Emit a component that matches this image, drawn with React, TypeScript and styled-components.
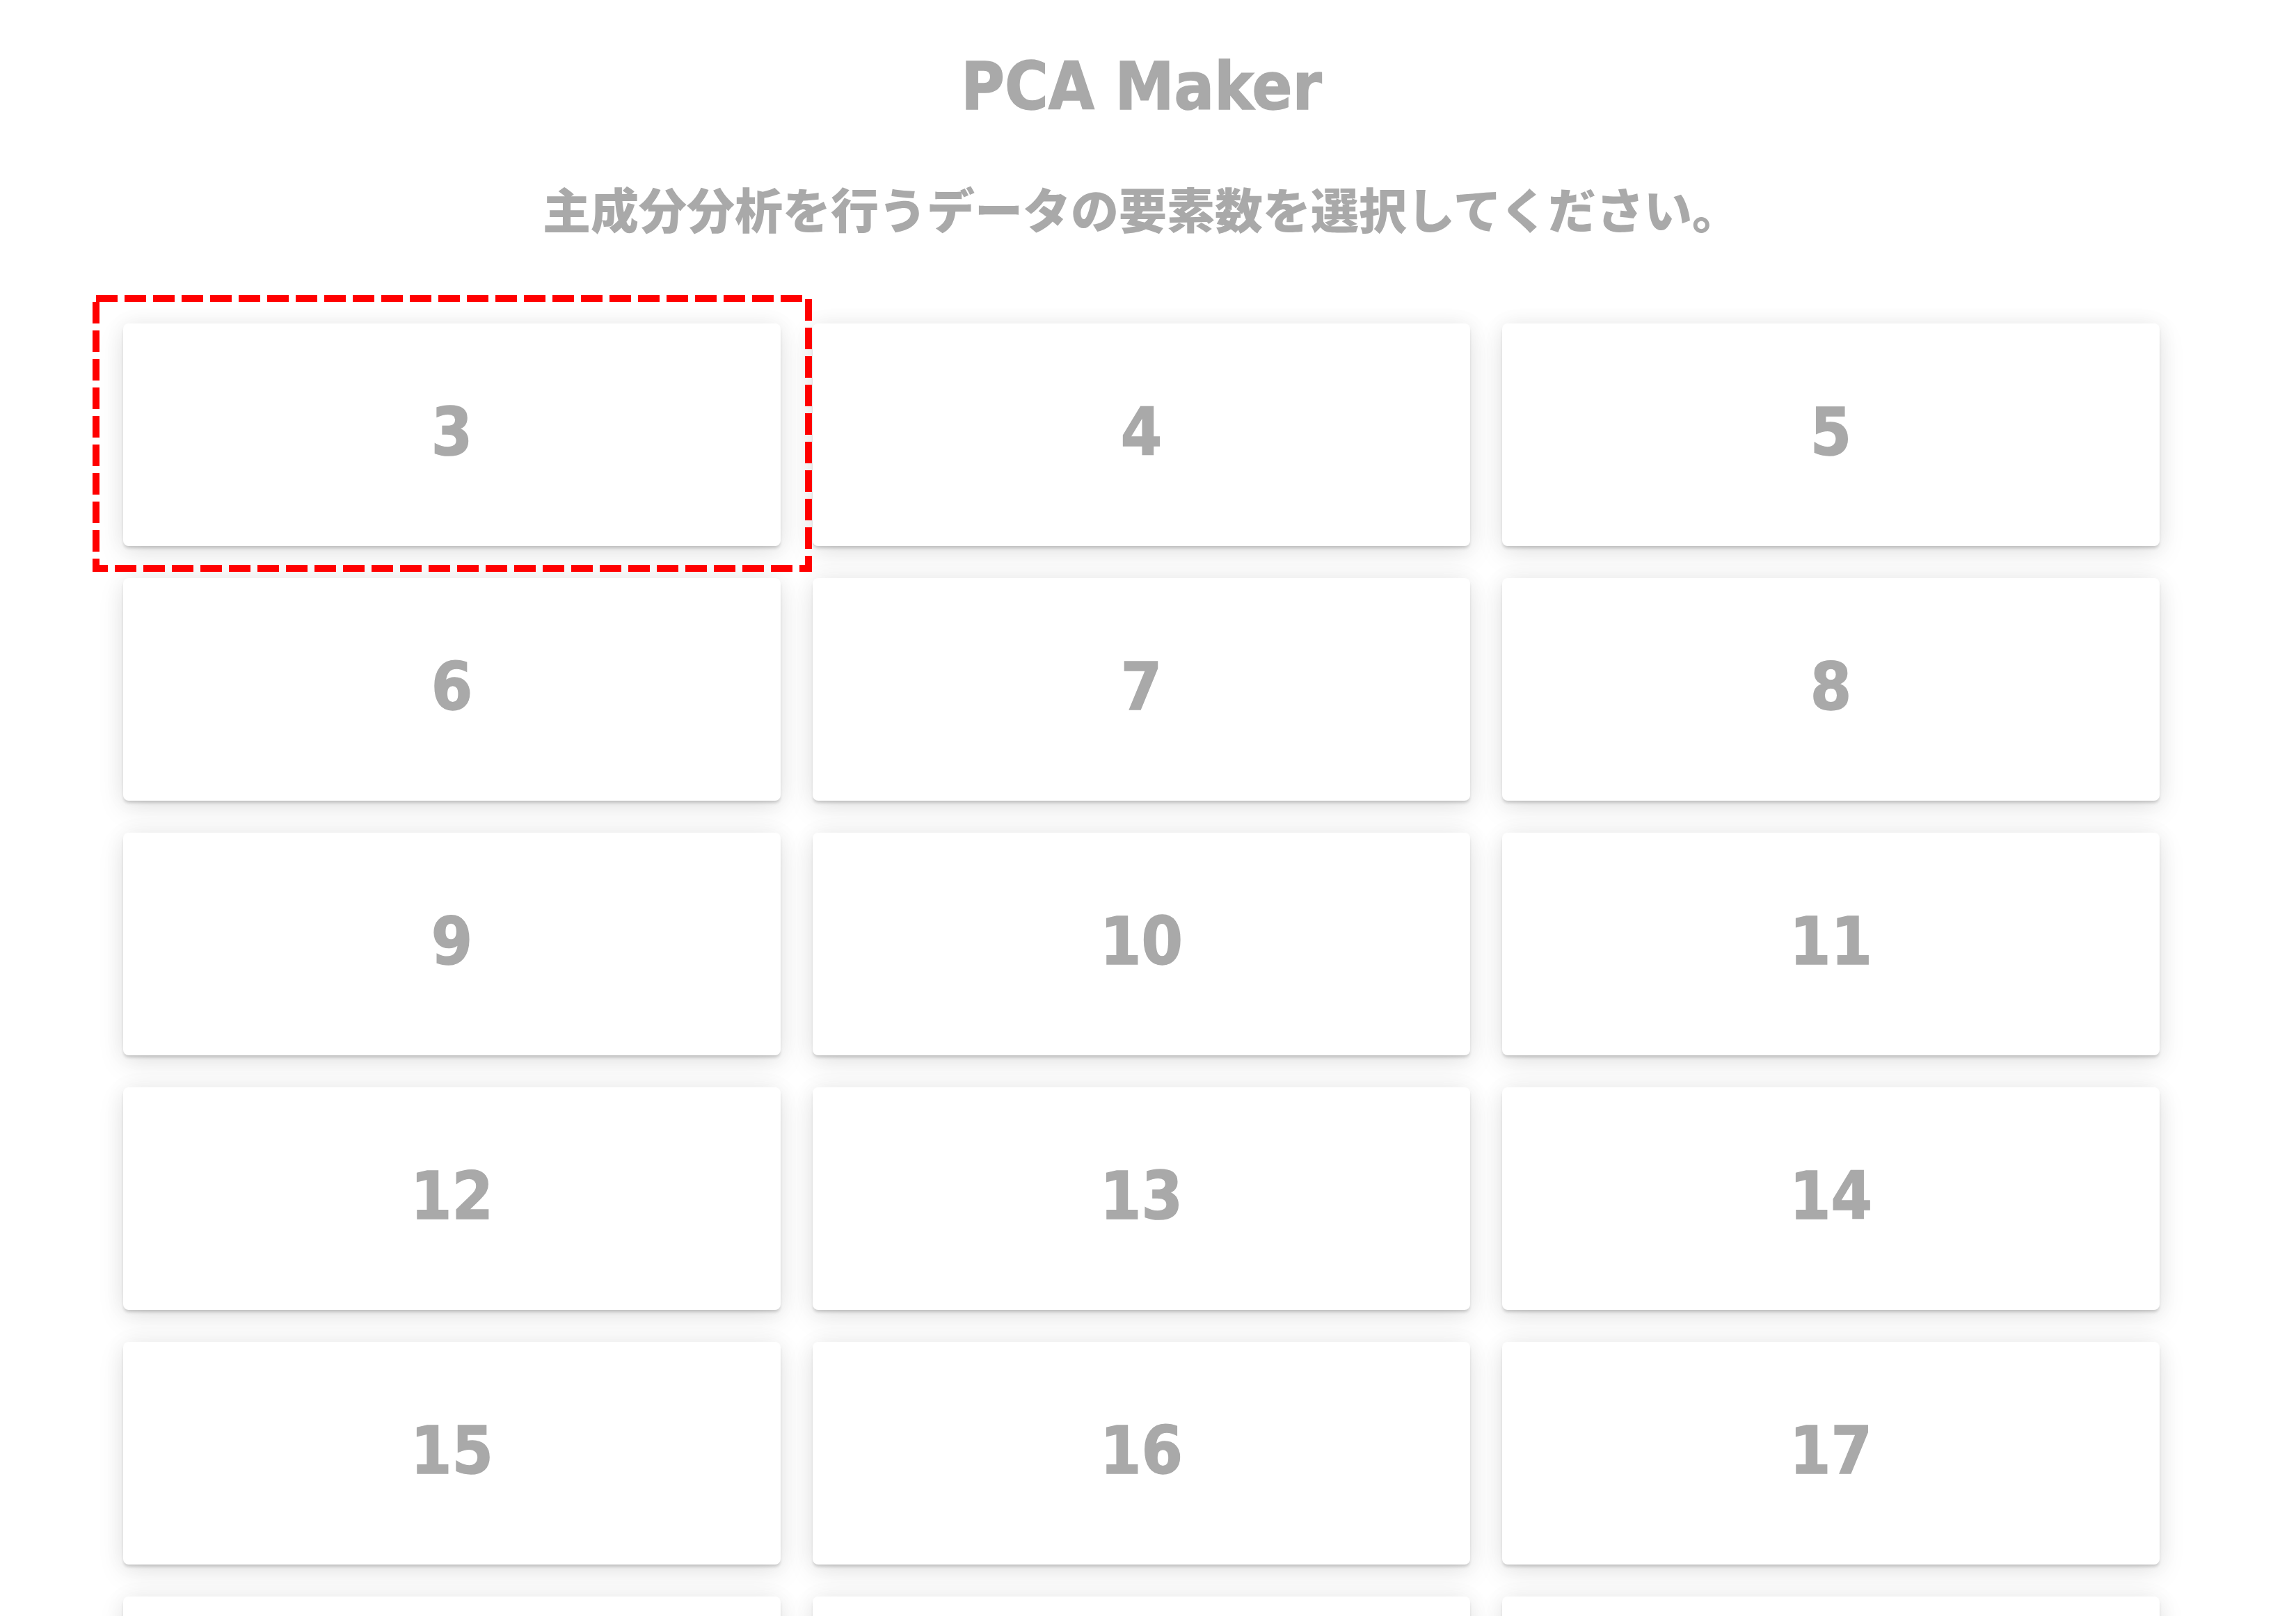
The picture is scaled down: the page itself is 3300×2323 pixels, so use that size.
import React from "react";
import styled, { createGlobalStyle } from "styled-components";

const Global = createGlobalStyle`
  html, body {
    margin: 0;
    padding: 0;
    background: #ffffff;
  }
  body {
    font-family: "DejaVu Sans Condensed", "DejaVu Sans", "Noto Sans CJK JP", sans-serif;
    overflow: hidden;
  }
`;

const Page = styled.main`
  display: flex;
  flex-direction: column;
  align-items: stretch;
  padding: 0 196px 0 177px;
  color: #a9a9a9;
`;

const Title = styled.h1`
  margin: 67px 0 0;
  font-family: "DejaVu Sans Condensed", "DejaVu Sans", sans-serif;
  font-stretch: condensed;
  font-weight: 700;
  font-size: 95px;
  line-height: 1.2;
  text-align: center;
  color: #a9a9a9;
  -webkit-text-stroke: 1.5px #a9a9a9;
`;

const Subtitle = styled.p`
  margin: 77px 0 0;
  font-family: "Noto Sans CJK JP", "Noto Sans", sans-serif;
  font-weight: 900;
  font-size: 69px;
  line-height: 1.2;
  text-align: center;
  color: #a9a9a9;
`;

const Grid = styled.div`
  margin-top: 124px;
  display: grid;
  grid-template-columns: repeat(3, 1fr);
  grid-auto-rows: 320px;
  column-gap: 46px;
  row-gap: 46px;
`;

const Card = styled.button<{ $z: number }>`
  position: relative;
  z-index: ${(p) => p.$z};
  display: flex;
  align-items: center;
  justify-content: center;
  padding: 0 0 8px;
  border: none;
  border-radius: 8px;
  background: #ffffff;
  box-shadow:
    0 4px 4px -1px rgba(0, 0, 0, 0.18),
    0 12px 40px rgba(0, 0, 0, 0.09),
    0 0 30px rgba(0, 0, 0, 0.06);
  font-family: "DejaVu Sans Condensed", "DejaVu Sans", sans-serif;
  font-stretch: condensed;
  font-weight: 700;
  font-size: 95px;
  line-height: 1.2;
  color: #a9a9a9;
  -webkit-text-stroke: 1.5px #a9a9a9;
  cursor: pointer;
`;

const Highlight = styled.svg`
  position: absolute;
  top: -41px;
  left: -44px;
  width: 1034px;
  height: 398px;
  pointer-events: none;
  overflow: visible;
`;

const counts = Array.from({ length: 18 }, (_, i) => i + 3);

export default function App() {
  return (
    <>
      <Global />
      <Page>
        <Title>PCA Maker</Title>
        <Subtitle>主成分分析を行うデータの要素数を選択してください。</Subtitle>
        <Grid>
          {counts.map((n, i) => (
            <Card key={n} $z={100 - i}>
              {n}
              {i === 0 && (
                <Highlight viewBox="0 0 1034 398">
                  <rect
                    x="5"
                    y="5"
                    width="1024"
                    height="388"
                    fill="none"
                    stroke="#ff0000"
                    strokeWidth="10"
                    strokeDasharray="31 10"
                  />
                </Highlight>
              )}
            </Card>
          ))}
        </Grid>
      </Page>
    </>
  );
}
